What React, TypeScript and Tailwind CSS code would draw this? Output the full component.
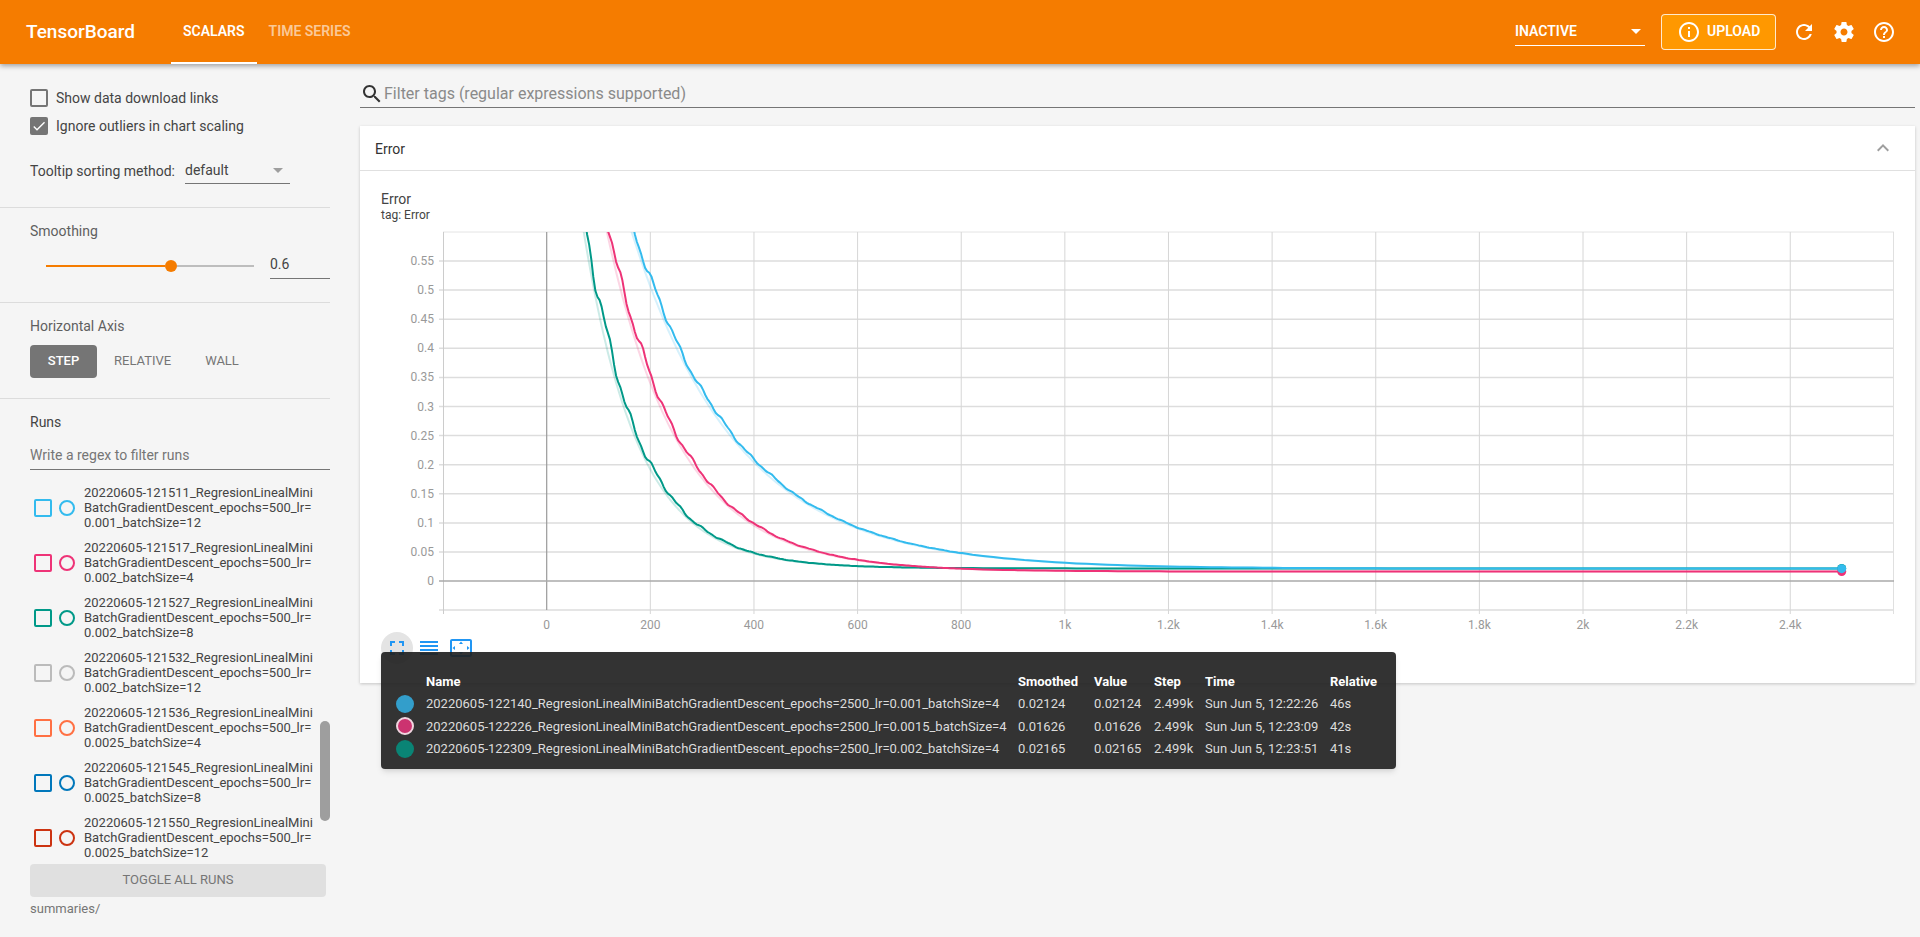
import React from "react";

const P = {
  search: "M15.5 14h-.79l-.28-.27C15.41 12.59 16 11.11 16 9.5 16 5.91 13.09 3 9.5 3S3 5.91 3 9.5 5.91 16 9.5 16c1.61 0 3.09-.59 4.23-1.57l.27.28v.79l5 4.99L20.49 19l-4.99-5zm-6 0C7.01 14 5 11.99 5 9.5S7.01 5 9.5 5 14 7.01 14 9.5 11.99 14 9.5 14z",
  refresh: "M17.65 6.35C16.2 4.9 14.21 4 12 4c-4.42 0-7.99 3.58-7.99 8s3.57 8 7.99 8c3.73 0 6.84-2.55 7.73-6h-2.08c-.82 2.33-3.04 4-5.65 4-3.31 0-6-2.69-6-6s2.69-6 6-6c1.66 0 3.14.69 4.22 1.78L13 11h7V4l-2.35 2.35z",
  settings: "M19.43 12.98c.04-.32.07-.64.07-.98s-.03-.66-.07-.98l2.11-1.65c.19-.15.24-.42.12-.64l-2-3.46c-.12-.22-.39-.3-.61-.22l-2.49 1c-.52-.4-1.08-.73-1.69-.98l-.38-2.65C14.46 2.18 14.25 2 14 2h-4c-.25 0-.46.18-.49.42l-.38 2.65c-.61.25-1.17.59-1.69.98l-2.49-1c-.23-.09-.49 0-.61.22l-2 3.46c-.13.22-.07.49.12.64l2.11 1.65c-.04.32-.07.65-.07.98s.03.66.07.98l-2.11 1.65c-.19.15-.24.42-.12.64l2 3.46c.12.22.39.3.61.22l2.49-1c.52.4 1.08.73 1.69.98l.38 2.65c.03.24.24.42.49.42h4c.25 0 .46-.18.49-.42l.38-2.65c.61-.25 1.17-.59 1.69-.98l2.49 1c.23.09.49 0 .61-.22l2-3.46c.12-.22.07-.49-.12-.64l-2.11-1.65zM12 15.5c-1.93 0-3.5-1.57-3.5-3.5s1.57-3.5 3.5-3.5 3.5 1.57 3.5 3.5-1.57 3.5-3.5 3.5z",
  help: "M11 18h2v-2h-2v2zm1-16C6.48 2 2 6.48 2 12s4.48 10 10 10 10-4.48 10-10S17.52 2 12 2zm0 18c-4.41 0-8-3.59-8-8s3.59-8 8-8 8 3.59 8 8-3.59 8-8 8zm0-14c-2.21 0-4 1.79-4 4h2c0-1.1.9-2 2-2s2 .9 2 2c0 2-3 1.75-3 5h2c0-2.25 3-2.5 3-5 0-2.21-1.79-4-4-4z",
  info: "M11 7h2v2h-2zm0 4h2v6h-2zm1-9C6.48 2 2 6.48 2 12s4.48 10 10 10 10-4.48 10-10S17.52 2 12 2zm0 18c-4.41 0-8-3.59-8-8s3.59-8 8-8 8 3.59 8 8-3.59 8-8 8z",
  fullscreen: "M7 14H5v5h5v-2H7v-3zm-2-4h2V7h3V5H5v5zm12 7h-3v2h5v-5h-2v3zM14 5v2h3v3h2V5h-5z",
  reorder: "M3 15h18v-2H3v2zm0 4h18v-2H3v2zm0-8h18V9H3v2zm0-6v2h18V5H3z",
  overscan: "M12.01 5.5L10 8h4l-1.99-2.5zM18 10v4l2.5-1.99L18 10zM6 10l-2.5 2.01L6 14v-4zm8 6h-4l2.01 2.5L14 16zm7-13H3c-1.1 0-2 .9-2 2v14c0 1.1.9 2 2 2h18c1.1 0 2-.9 2-2V5c0-1.1-.9-2-2-2zm0 16.01H3V4.99h18v14.02z",
  chevron: "M12 8l-6 6 1.41 1.41L12 10.83l4.59 4.58L18 14z",
  check: "M9 16.17L4.83 12l-1.42 1.41L9 19 21 7l-1.41-1.41z",
  arrow: "M7 10l5 5 5-5z",
};

function Icon({ d, className }: { d: string; className?: string }) {
  return (
    <svg viewBox="0 0 24 24" className={className} fill="currentColor">
      <path d={d} />
    </svg>
  );
}

const runs = [
  { name: "20220605-121511_RegresionLinealMiniBatchGradientDescent_epochs=500_lr=0.001_batchSize=12", box: "border-[#33bbee]" },
  { name: "20220605-121517_RegresionLinealMiniBatchGradientDescent_epochs=500_lr=0.002_batchSize=4", box: "border-[#ee3377]" },
  { name: "20220605-121527_RegresionLinealMiniBatchGradientDescent_epochs=500_lr=0.002_batchSize=8", box: "border-[#009988]" },
  { name: "20220605-121532_RegresionLinealMiniBatchGradientDescent_epochs=500_lr=0.002_batchSize=12", box: "border-[#bbbbbb]" },
  { name: "20220605-121536_RegresionLinealMiniBatchGradientDescent_epochs=500_lr=0.0025_batchSize=4", box: "border-[#ff7043]" },
  { name: "20220605-121545_RegresionLinealMiniBatchGradientDescent_epochs=500_lr=0.0025_batchSize=8", box: "border-[#0077bb]" },
  { name: "20220605-121550_RegresionLinealMiniBatchGradientDescent_epochs=500_lr=0.0025_batchSize=12", box: "border-[#cc3311]" },
];

const tooltipRows = [
  { dot: "bg-[#339ecb]", name: "20220605-122140_RegresionLinealMiniBatchGradientDescent_epochs=2500_lr=0.001_batchSize=4", smoothed: "0.02124", value: "0.02124", time: "Sun Jun 5, 12:22:26", rel: "46s" },
  { dot: "bg-[#cc3370] border-2 border-[#f0d5df]", name: "20220605-122226_RegresionLinealMiniBatchGradientDescent_epochs=2500_lr=0.0015_batchSize=4", smoothed: "0.01626", value: "0.01626", time: "Sun Jun 5, 12:23:09", rel: "42s" },
  { dot: "bg-[#0a8475]", name: "20220605-122309_RegresionLinealMiniBatchGradientDescent_epochs=2500_lr=0.002_batchSize=4", smoothed: "0.02165", value: "0.02165", time: "Sun Jun 5, 12:23:51", rel: "41s" },
];

// chart scale, in page pixels
const X0 = 546.7;
const Y0 = 581;
const sx = (s: number) => X0 + (s / 200) * 103.63;
const sy = (v: number) => Y0 - (v / 0.05) * 29.1;

const yTicks = ["0.55", "0.5", "0.45", "0.4", "0.35", "0.3", "0.25", "0.2", "0.15", "0.1", "0.05", "0"];
const xTicks = ["0", "200", "400", "600", "800", "1k", "1.2k", "1.4k", "1.6k", "1.8k", "2k", "2.2k", "2.4k"];

const series = [
  { color: "#009988", a: 1.21, tau: 105, c: 0.02165, seed: 1.3 },
  { color: "#ee3377", a: 1.38, tau: 142, c: 0.01626, seed: 4.1 },
  { color: "#33bbee", a: 1.325, tau: 205, c: 0.02124, seed: 7.7 },
];

function curve(a: number, tau: number, c: number, seed: number, shift: number, wobble: number) {
  const pts: string[] = [];
  const at = (s: number) => {
    const n = Math.sin(s / 7.3 + seed) + 0.6 * Math.sin(s / 3.1 + seed * 2) + 0.5 * Math.sin(s / 17 + seed * 3);
    const j = wobble * n * Math.max(0.05, Math.exp(-s / 900));
    const v = c + a * Math.exp(-(s + shift + j) / tau);
    return `${sx(s).toFixed(1)},${sy(v).toFixed(1)}`;
  };
  for (let s = 30; s < 2499; s += s < 800 ? 4 : 20) pts.push(at(s));
  pts.push(at(2499));
  return pts.join(" ");
}

function Chart() {
  return (
    <svg viewBox="360 225 1555 410" className="block w-[1555px] h-[410px]">
      <defs>
        <clipPath id="plot">
          <rect x="443" y="232" width="1451" height="378" />
        </clipPath>
      </defs>
      {/* grid */}
      <line x1="443" x2="1894" y1="232" y2="232" stroke="#e4e4e4" />
      <line x1="439" x2="1894" y1="610" y2="610" stroke="#ddd" strokeWidth="1.5" />
      {yTicks.map((t, i) => {
        const y = 261 + i * 29.1;
        return (
          <g key={t}>
            {t !== "0" && <line x1="439" x2="1894" y1={y} y2={y} stroke="#ddd" strokeWidth="1.5" />}
            <text x="434" y={y + 4} textAnchor="end" fontSize="12" fill="#999">{t}</text>
          </g>
        );
      })}
      <line x1="443.5" x2="443.5" y1="232" y2="614" stroke="#ccc" />
      <line x1="1893.5" x2="1893.5" y1="232" y2="614" stroke="#e0e0e0" />
      {xTicks.map((t, i) => {
        const x = X0 + i * 103.63;
        return (
          <g key={t}>
            {t !== "0" && <line x1={x} x2={x} y1="232" y2="614" stroke="#d6d6d6" />}
            <text x={x} y="629" textAnchor="middle" fontSize="12" fill="#999">{t}</text>
          </g>
        );
      })}
      <line x1={X0} x2={X0} y1="232" y2="610" stroke="#999" strokeWidth="1.2" />
      <line x1="439" x2="1894" y1="581" y2="581" stroke="#aaa" strokeWidth="1.6" />
      {/* series */}
      <g clipPath="url(#plot)" fill="none" strokeLinejoin="round">
        {series.map((l) => (
          <polyline key={`raw${l.color}`} points={curve(l.a, l.tau, l.c, l.seed, 6, 0)} stroke={l.color} strokeOpacity="0.2" strokeWidth="2" />
        ))}
        {series.map((l) => (
          <polyline key={l.color} points={curve(l.a, l.tau, l.c, l.seed, 0, 2.6)} stroke={l.color} strokeWidth="2" />
        ))}
      </g>
      {series.map((l) => (
        <circle key={l.color} cx="1841.7" cy={sy(l.c)} r="4.5" fill={l.color} />
      ))}
    </svg>
  );
}

function Sidebar() {
  return (
    <aside className="w-[330px] shrink-0 h-[873px] flex flex-col text-sm text-[#444]">
      <section className="h-[144px] pl-[30px] pt-[25px] border-b border-[#dcdcdc]">
        <label className="flex items-center h-[18px]">
          <span className="w-[18px] h-[18px] border-2 border-[#757575] rounded-[2px]" />
          <span className="ml-2">Show data download links</span>
        </label>
        <label className="flex items-center h-[18px] mt-[10px]">
          <span className="w-[18px] h-[18px] bg-[#757575] rounded-[2px] flex items-center justify-center text-white">
            <Icon d={P.check} className="w-4 h-4" />
          </span>
          <span className="ml-2">Ignore outliers in chart scaling</span>
        </label>
        <div className="flex mt-[21px]">
          <span className="w-[155px] pt-[6px] leading-[18px]">Tooltip sorting method:</span>
          <div className="w-[105px] h-[28px] flex items-center border-b border-[#757575]">
            <span>default</span>
            <Icon d={P.arrow} className="w-6 h-6 ml-auto text-[#9e9e9e]" />
          </div>
        </div>
      </section>

      <section className="h-[95px] pl-[30px] pt-[14px] border-b border-[#dcdcdc]">
        <div className="leading-[18px] text-[#5f5f5f]">Smoothing</div>
        <div className="flex mt-[10px] items-start">
          <div className="ml-4 w-[208px] h-8 flex items-center">
            <div className="w-[119px] h-0.5 bg-[#f57c00]" />
            <div className="w-3 h-3 rounded-full bg-[#f57c00]" />
            <div className="flex-1 h-0.5 bg-[#bdbdbd]" />
          </div>
          <div className="ml-4 w-[60px] h-[29px] flex items-center border-b border-[#757575]">0.6</div>
        </div>
      </section>

      <section className="h-[96px] pl-[30px] pt-[14px] border-b border-[#dcdcdc]">
        <div className="leading-[18px] text-[#5f5f5f]">Horizontal Axis</div>
        <div className="flex items-center mt-[10px] text-[13px]">
          <button className="w-[67px] h-[33px] rounded bg-[#757575] text-white font-medium">STEP</button>
          <button className="ml-[17px] w-[57px] h-[33px] text-[#757575]">RELATIVE</button>
          <button className="ml-[34px] w-[34px] h-[33px] text-[#757575]">WALL</button>
        </div>
      </section>

      <section className="flex-1 min-h-0 pl-[30px] pt-[14px]">
        <div className="leading-[18px]">Runs</div>
        <div className="mt-[10px] h-[29px] flex items-center border-b border-[#757575] text-[#757575]">Write a regex to filter runs</div>
        <div className="relative mt-[10px] h-[384px] w-[300px] overflow-hidden">
          {runs.map((r) => (
            <div key={r.name} className="flex items-center h-[55px] pl-1">
              <span className={`w-[18px] h-[18px] border-2 rounded-[2px] shrink-0 ${r.box}`} />
              <span className={`w-4 h-4 ml-[7px] border-2 rounded-full shrink-0 ${r.box}`} />
              <span className="ml-[9px] w-[231px] text-[13px] leading-[15px] break-all">{r.name}</span>
            </div>
          ))}
          <div className="absolute left-[290px] top-[241px] w-[10px] h-[100px] rounded-[5px] bg-[#9e9e9e]" />
        </div>
        <button className="w-[296px] h-[33px] rounded bg-[#e0e0e0] text-[13px] text-[#757575]">TOGGLE ALL RUNS</button>
        <div className="mt-1 text-[13px] leading-4 text-[#757575]">summaries/</div>
      </section>
    </aside>
  );
}

function Tooltip() {
  const th = "text-left font-bold text-white";
  return (
    <div className="absolute left-[21px] top-[526px] w-[1015px] h-[117px] pt-[18px] rounded bg-[#222222]/92 shadow-md text-[13px] text-[#dcdcdc]">
      <table className="w-full table-fixed border-collapse">
        <colgroup>
          <col className="w-[45px]" />
          <col className="w-[592px]" />
          <col className="w-[76px]" />
          <col className="w-[60px]" />
          <col className="w-[51px]" />
          <col className="w-[125px]" />
          <col />
        </colgroup>
        <thead>
          <tr className="h-[22.5px]">
            <th />
            <th className={th}>Name</th>
            <th className={th}>Smoothed</th>
            <th className={th}>Value</th>
            <th className={th}>Step</th>
            <th className={th}>Time</th>
            <th className={th}>Relative</th>
          </tr>
        </thead>
        <tbody>
          {tooltipRows.map((r) => (
            <tr key={r.name} className="h-[22.5px]">
              <td className="pl-[15px]">
                <span className={`block w-[18px] h-[18px] rounded-full ${r.dot}`} />
              </td>
              <td className="whitespace-nowrap">{r.name}</td>
              <td>{r.smoothed}</td>
              <td>{r.value}</td>
              <td>2.499k</td>
              <td className="whitespace-nowrap">{r.time}</td>
              <td>{r.rel}</td>
            </tr>
          ))}
        </tbody>
      </table>
    </div>
  );
}

export default function App() {
  return (
    <div className="w-[1920px] h-[937px] overflow-hidden bg-[#f5f5f5] font-['Roboto',sans-serif]">
      {/* Toolbar */}
      <header className="relative z-10 h-16 bg-[#f57c00] text-white flex items-center pl-[26px] pr-4 shadow-[0_2px_5px_rgba(0,0,0,0.35)]">
        <span className="text-[19px] font-medium w-[145px]">TensorBoard</span>
        <nav className="flex h-16 text-sm font-semibold">
          <a className="px-3 flex items-center border-b-2 border-white h-16">SCALARS</a>
          <a className="px-3 flex items-center border-b-2 border-transparent text-white/60 h-16">TIME SERIES</a>
        </nav>
        <div className="ml-auto flex items-center">
          <div className="w-[130px] h-[31px] -mt-[3px] pt-[2px] flex items-center border-b border-white text-sm font-semibold">
            <span>INACTIVE</span>
            <Icon d={P.arrow} className="w-6 h-6 ml-auto -mr-[3px]" />
          </div>
          <button className="ml-4 w-[115px] h-9 rounded border border-white/80 bg-[#ff9800] flex items-center pl-[15px] text-sm font-semibold">
            <Icon d={P.info} className="w-6 h-6" />
            <span className="ml-[6px] mt-[-3px]">UPLOAD</span>
          </button>
          <button className="ml-2 w-10 h-10 flex items-center justify-center"><Icon d={P.refresh} className="w-6 h-6" /></button>
          <button className="w-10 h-10 flex items-center justify-center"><Icon d={P.settings} className="w-6 h-6" /></button>
          <button className="w-10 h-10 flex items-center justify-center"><Icon d={P.help} className="w-6 h-6" /></button>
        </div>
      </header>

      <div className="flex">
        <Sidebar />
        <main className="w-[1585px] pl-[30px]">
          <div className="mt-4 h-[28px] flex items-center border-b border-[#757575] text-base text-[#8a8a8a]">
            <Icon d={P.search} className="w-6 h-6 text-[#333]" />
            <span>Filter tags (regular expressions supported)</span>
          </div>

          <div className="relative mt-[18px] w-[1555px] h-[557px] bg-white shadow-[0_1px_3px_rgba(0,0,0,0.2)]">
            <div className="h-[45px] pl-[15px] pr-5 flex items-center justify-between border-b border-[#e0e0e0] text-sm text-[#333]">
              <span className="pt-[2px]">Error</span>
              <Icon d={P.chevron} className="w-6 h-6 text-[#9e9e9e]" />
            </div>
            <div className="pl-[21px] pt-[19px] h-[54px] text-[#444]">
              <div className="text-sm leading-[18px]">Error</div>
              <div className="text-xs leading-[14px]">tag: Error</div>
            </div>
            <Chart />
            <div className="flex -mt-[3px] pl-[21px] text-[#2196f3]">
              <button className="w-8 h-8 rounded-full bg-[#e4e4e4] flex items-center justify-center"><Icon d={P.fullscreen} className="w-6 h-6" /></button>
              <button className="w-8 h-8 flex items-center justify-center"><Icon d={P.reorder} className="w-6 h-6" /></button>
              <button className="w-8 h-8 flex items-center justify-center"><Icon d={P.overscan} className="w-6 h-6" /></button>
            </div>
            <Tooltip />
          </div>
        </main>
      </div>
    </div>
  );
}
